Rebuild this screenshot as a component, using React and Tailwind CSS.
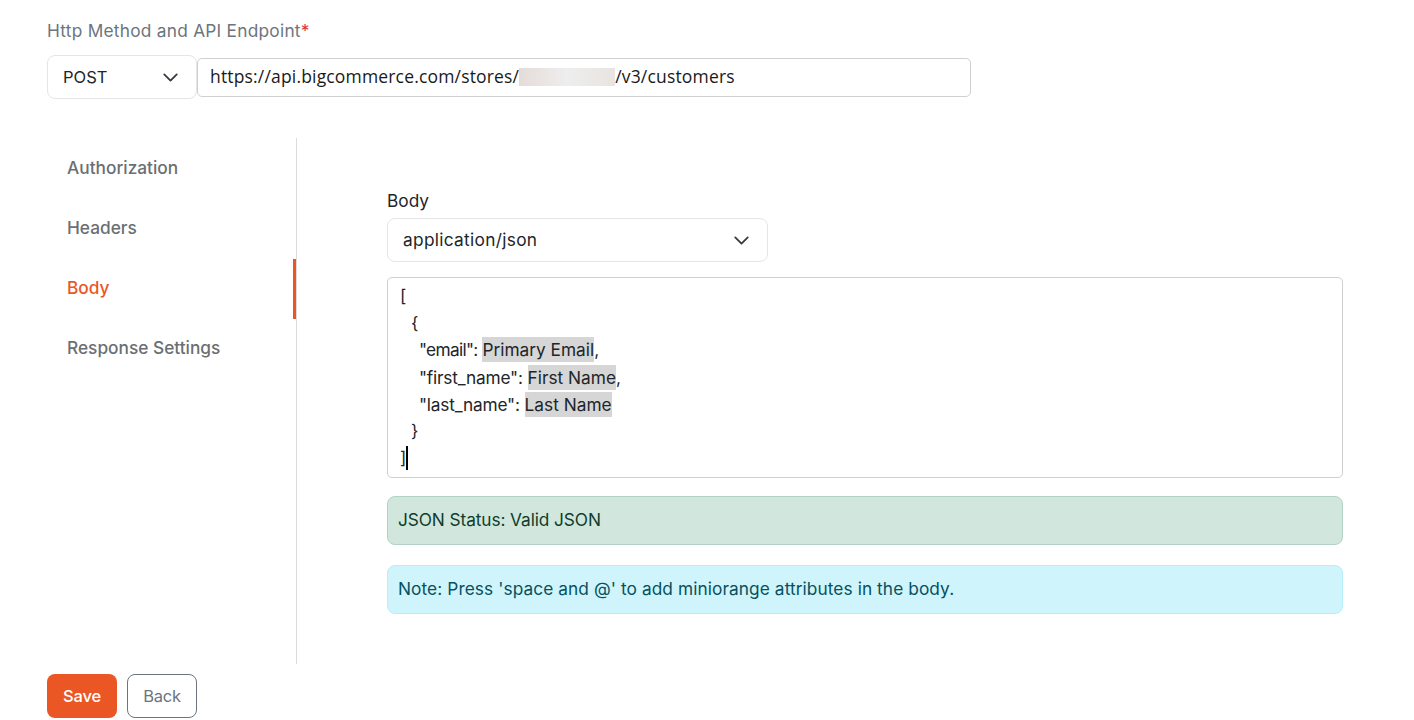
import React from "react";
import { ChevronDown } from "lucide-react";

const tabs = ["Authorization", "Headers", "Body", "Response Settings"];

const Select = ({ value, className }) => (
  <div className={`flex items-center justify-between h-11 pl-[15px] pr-[13px] bg-white border border-[#e3e6e8] rounded-lg text-[#212529] ${className}`}>
    <span>{value}</span>
    <ChevronDown size={25} strokeWidth={1.7} className="text-[#343a40]" />
  </div>
);

const Tag = ({ children }) => <span className="bg-[#d6d6d6] py-[2px]">{children}</span>;

const App = () => {
  return (
    <div className="h-[720px] overflow-hidden bg-white pl-[47px] pt-[20px] text-[17.3px] font-['Inter','Noto_Sans',sans-serif]">
      <div className="text-[#6c757d] leading-[22px] tracking-[0.25px]">
        Http Method and API Endpoint<span className="text-[#dc3545]">*</span>
      </div>

      <div className="flex items-center mt-[13px]">
        <Select value="POST" className="w-[150px] text-[16.5px]" />
        <div className="flex items-center w-[774px] h-[39px] pl-[12px] pb-px border border-[#ced0d2] rounded-[5px] text-[#1a1a1a] text-[17.5px] tracking-[0.17px] font-['Open_Sans',sans-serif]">
          <span>https://api.bigcommerce.com/stores/</span>
          <span className="w-[96px] h-[18px] bg-gradient-to-r from-[#e5dcd8] via-[#eeeeee] to-[#e8e4e1]" />
          <span>/v3/customers</span>
        </div>
      </div>

      <div className="flex mt-[39px] h-[526px]">
        <div className="w-[250px] pt-px border-r border-[#d9dbdd]">
          {tabs.map((tab) => (
            <div
              key={tab}
              className={`flex items-center h-[60px] pl-5 pb-[1.5px] font-medium ${
                tab === "Body" ? "text-[#ea5724] border-r-[3px] border-[#ea5724]" : "text-[#6b6f73]"
              }`}
            >
              {tab}
            </div>
          ))}
        </div>

        <div className="w-[956px] ml-[90px] pt-[51.5px]">
          <div className="text-[#212529] leading-[22px]">Body</div>
          <Select value="application/json" className="w-[381px] mt-[6.5px] tracking-[0.3px]" />

          <div className="h-[201px] mt-[15px] pt-[4px] pl-[12px] border border-[#cdcfd1] rounded-[5px] text-[#212529] leading-[27.2px]">
            <div>[</div>
            <div className="pl-[11px]">{"{"}</div>
            <div className="pl-[19px]"><span className="tracking-[-0.7px]">"email":</span> <Tag>Primary Email</Tag>,</div>
            <div className="pl-[19px]"><span className="tracking-[-0.2px]">"first_name":</span> <Tag>First Name</Tag>,</div>
            <div className="pl-[19px]"><span className="tracking-[-0.2px]">"last_name":</span> <Tag>Last Name</Tag></div>
            <div className="pl-[11px] -mt-px">{"}"}</div>
            <div className="flex items-center h-[27px]">
              ]<span className="w-[2px] h-[24px] bg-black" />
            </div>
          </div>

          <div className="flex items-center h-[49px] mt-[18px] px-[10px] pb-px bg-[#d1e7dd] border border-[#b2d2c3] rounded-lg text-[#0f3d2b] tracking-[-0.1px]">
            JSON Status: Valid JSON
          </div>
          <div className="flex items-center h-[49px] mt-[20px] px-[10px] pb-px bg-[#cff4fc] border border-[#b6effb] rounded-lg text-[#055160] tracking-[0.08px]">
            Note: Press 'space and @' to add miniorange attributes in the body.
          </div>
        </div>
      </div>

      <div className="flex gap-[10px] mt-[10px] text-[16.5px] tracking-[-0.2px]">
        <button className="w-[70px] h-[44px] bg-[#ea5724] rounded-lg text-white font-medium">Save</button>
        <button className="w-[70px] h-[44px] bg-white border border-[#6c757d] rounded-lg text-[#6c757d]">Back</button>
      </div>
    </div>
  );
};

export default App;
